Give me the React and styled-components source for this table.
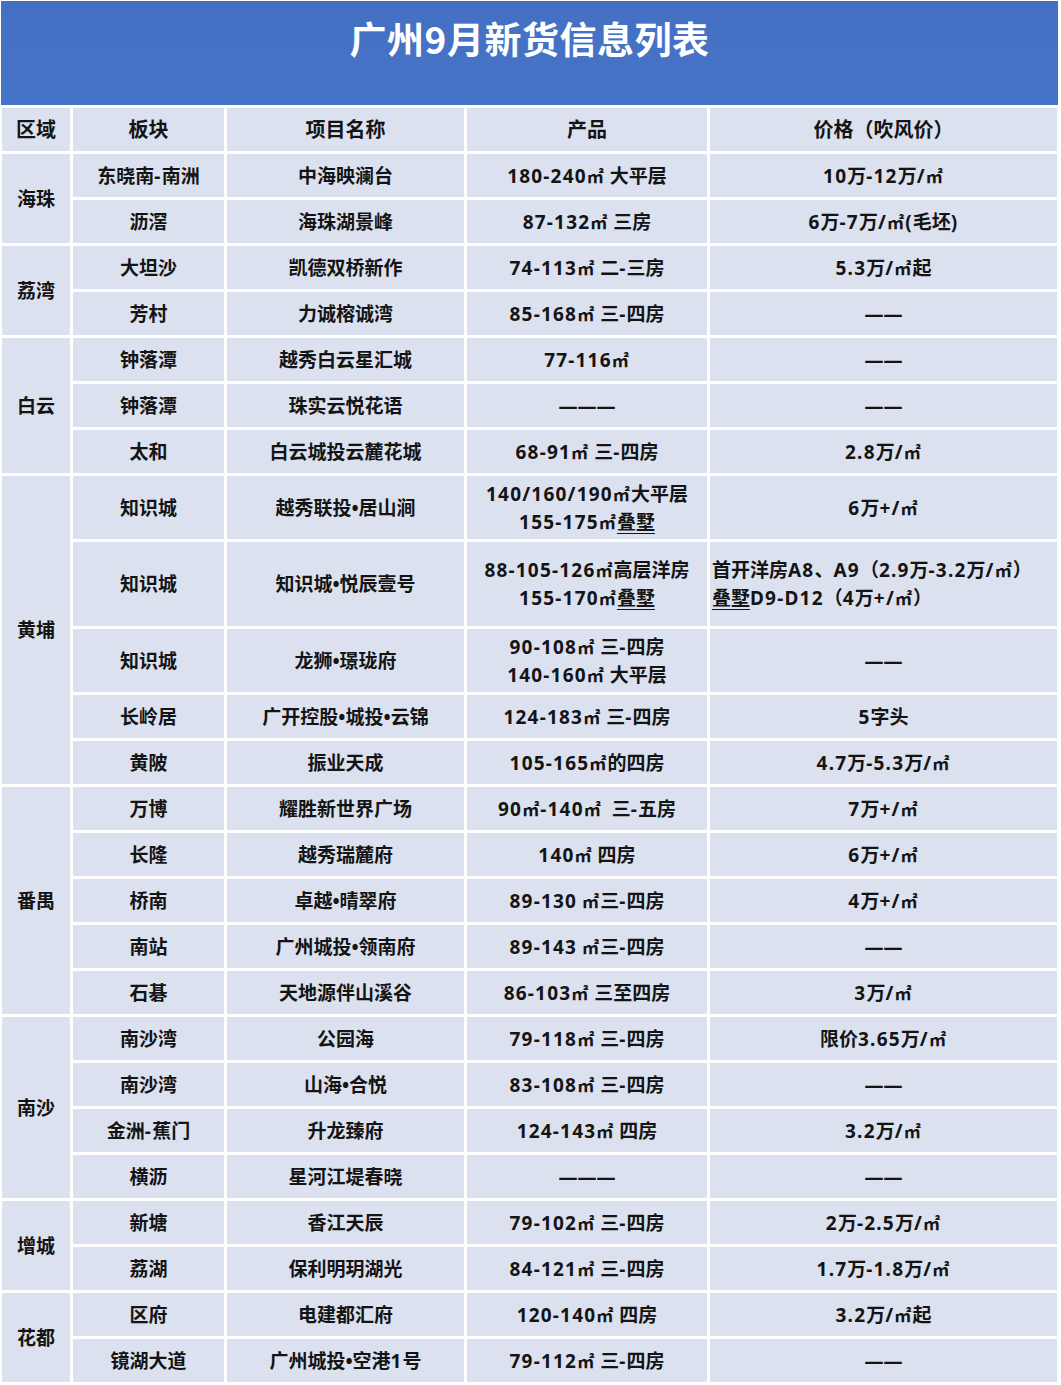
import styled, { createGlobalStyle } from "styled-components";

const GlobalStyle = createGlobalStyle`
  html, body {
    margin: 0;
    padding: 0;
    background: #ffffff;
  }
  body {
    font-family: "Noto Sans", "Noto Sans CJK SC", sans-serif;
    color: #141414;
  }
`;

const DASH2 = "——";
const DASH3 = "———";

const groups = [
  {
    region: "海珠",
    rows: [
      { area: "东晓南-南洲", name: "中海映澜台", product: "180-240㎡ 大平层", price: "10万-12万/㎡" },
      { area: "沥滘", name: "海珠湖景峰", product: "87-132㎡ 三房", price: "6万-7万/㎡(毛坯)" },
    ],
  },
  {
    region: "荔湾",
    rows: [
      { area: "大坦沙", name: "凯德双桥新作", product: "74-113㎡ 二-三房", price: "5.3万/㎡起" },
      { area: "芳村", name: "力诚榕诚湾", product: "85-168㎡ 三-四房", price: DASH2 },
    ],
  },
  {
    region: "白云",
    rows: [
      { area: "钟落潭", name: "越秀白云星汇城", product: "77-116㎡", price: DASH2 },
      { area: "钟落潭", name: "珠实云悦花语", product: DASH3, price: DASH2 },
      { area: "太和", name: "白云城投云麓花城", product: "68-91㎡ 三-四房", price: "2.8万/㎡" },
    ],
  },
  {
    region: "黄埔",
    rows: [
      {
        area: "知识城",
        name: "越秀联投•居山涧",
        product: ["140/160/190㎡大平层", "155-175㎡叠墅"],
        price: "6万+/㎡",
        h: 63,
      },
      {
        area: "知识城",
        name: "知识城•悦辰壹号",
        product: ["88-105-126㎡高层洋房", "155-170㎡叠墅"],
        price: ["首开洋房A8、A9（2.9万-3.2万/㎡）", "叠墅D9-D12（4万+/㎡）"],
        left: true,
        h: 84,
      },
      {
        area: "知识城",
        name: "龙狮•璟珑府",
        product: ["90-108㎡ 三-四房", "140-160㎡ 大平层"],
        price: DASH2,
        h: 63,
      },
      { area: "长岭居", name: "广开控股•城投•云锦", product: "124-183㎡ 三-四房", price: "5字头" },
      { area: "黄陂", name: "振业天成", product: "105-165㎡的四房", price: "4.7万-5.3万/㎡" },
    ],
  },
  {
    region: "番禺",
    rows: [
      { area: "万博", name: "耀胜新世界广场", product: "90㎡-140㎡  三-五房", price: "7万+/㎡" },
      { area: "长隆", name: "越秀瑞麓府", product: "140㎡ 四房", price: "6万+/㎡" },
      { area: "桥南", name: "卓越•晴翠府", product: "89-130 ㎡三-四房", price: "4万+/㎡" },
      { area: "南站", name: "广州城投•领南府", product: "89-143 ㎡三-四房", price: DASH2 },
      { area: "石碁", name: "天地源伴山溪谷", product: "86-103㎡ 三至四房", price: "3万/㎡" },
    ],
  },
  {
    region: "南沙",
    rows: [
      { area: "南沙湾", name: "公园海", product: "79-118㎡ 三-四房", price: "限价3.65万/㎡" },
      { area: "南沙湾", name: "山海•合悦", product: "83-108㎡ 三-四房", price: DASH2 },
      { area: "金洲-蕉门", name: "升龙臻府", product: "124-143㎡ 四房", price: "3.2万/㎡" },
      { area: "横沥", name: "星河江堤春晓", product: DASH3, price: DASH2 },
    ],
  },
  {
    region: "增城",
    rows: [
      { area: "新塘", name: "香江天辰", product: "79-102㎡ 三-四房", price: "2万-2.5万/㎡" },
      { area: "荔湖", name: "保利明玥湖光", product: "84-121㎡ 三-四房", price: "1.7万-1.8万/㎡" },
    ],
  },
  {
    region: "花都",
    rows: [
      { area: "区府", name: "电建都汇府", product: "120-140㎡ 四房", price: "3.2万/㎡起" },
      { area: "镜湖大道", name: "广州城投•空港1号", product: "79-112㎡ 三-四房", price: DASH2 },
    ],
  },
];

const headers = ["区域", "板块", "项目名称", "产品", "价格（吹风价）"];

const Page = styled.div`
  width: 1061px;
  background: #ffffff;
`;

const TitleBar = styled.div`
  margin: 1px 0 0 1px;
  width: 1057px;
  height: 104px;
  box-sizing: border-box;
  padding-top: 13px;
  background: linear-gradient(180deg, #4470c3 0%, #4674c6 100%);
  display: flex;
  justify-content: center;
`;

const Title = styled.h1`
  margin: 0;
  font-family: "Noto Sans CJK SC", sans-serif;
  font-size: 37px;
  line-height: 48px;
  font-weight: 700;
  color: #ffffff;
  letter-spacing: 0.5px;
`;

const Grid = styled.div`
  display: grid;
  grid-template-columns: 68px 151px 237px 240px 347px;
  grid-template-rows: ${(p) => p.$rows};
  gap: 3px;
  padding: 3px 0 2px 2px;
`;

const Cell = styled.div`
  grid-column: ${(p) => p.$col};
  grid-row: ${(p) => (p.$span ? `span ${p.$span}` : "auto")};
  background: #dbe1ef;
  display: flex;
  flex-direction: column;
  justify-content: center;
  align-items: ${(p) => (p.$left ? "flex-start" : "center")};
  padding: 0 ${(p) => (p.$left ? "2px" : "0")};
  font-size: ${(p) => (p.$head ? "20px" : "19px")};
  line-height: 28px;
  font-weight: 700;
  white-space: pre;
  text-align: ${(p) => (p.$left ? "left" : "center")};
`;

const Line = styled.span`
  display: block;
`;

const Num = styled.span`
  letter-spacing: 1.2px;
`;

const Sq = styled.span`
  font-family: "Noto Sans CJK SC", sans-serif;
  font-size: 0.9em;
  margin-right: 1px;
`;

const Under = styled.span`
  text-decoration: underline;
  text-decoration-thickness: 1px;
  text-underline-offset: 4px;
`;

const renderText = (text) =>
  text.split(/(㎡|叠墅|[\x21-\x7e]+)/).map((part, i) => {
    if (part === "㎡") return <Sq key={i}>㎡</Sq>;
    if (part === "叠墅") return <Under key={i}>叠墅</Under>;
    if (/^[\x21-\x7e]+$/.test(part)) return <Num key={i}>{part}</Num>;
    return part;
  });

const Content = ({ value }) =>
  (Array.isArray(value) ? value : [value]).map((line, i) => (
    <Line key={i}>{renderText(line)}</Line>
  ));

const App = () => {
  const rowHeights = ["43px"];
  groups.forEach((g) => g.rows.forEach((r) => rowHeights.push(`${r.h || 43}px`)));

  return (
    <Page>
      <GlobalStyle />
      <TitleBar>
        <Title>广州9月新货信息列表</Title>
      </TitleBar>
      <Grid $rows={rowHeights.join(" ")}>
        {headers.map((h, i) => (
          <Cell key={h} $col={i + 1} $head>
            {h}
          </Cell>
        ))}
        {groups.map((g) => [
          <Cell key={g.region} $col={1} $span={g.rows.length}>
            {g.region}
          </Cell>,
          ...g.rows.flatMap((r, i) => [
            <Cell key={`${g.region}-${i}-a`} $col={2}>
              <Content value={r.area} />
            </Cell>,
            <Cell key={`${g.region}-${i}-n`} $col={3}>
              <Content value={r.name} />
            </Cell>,
            <Cell key={`${g.region}-${i}-p`} $col={4}>
              <Content value={r.product} />
            </Cell>,
            <Cell key={`${g.region}-${i}-v`} $col={5} $left={r.left}>
              <Content value={r.price} />
            </Cell>,
          ]),
        ])}
      </Grid>
    </Page>
  );
};

export default App;
